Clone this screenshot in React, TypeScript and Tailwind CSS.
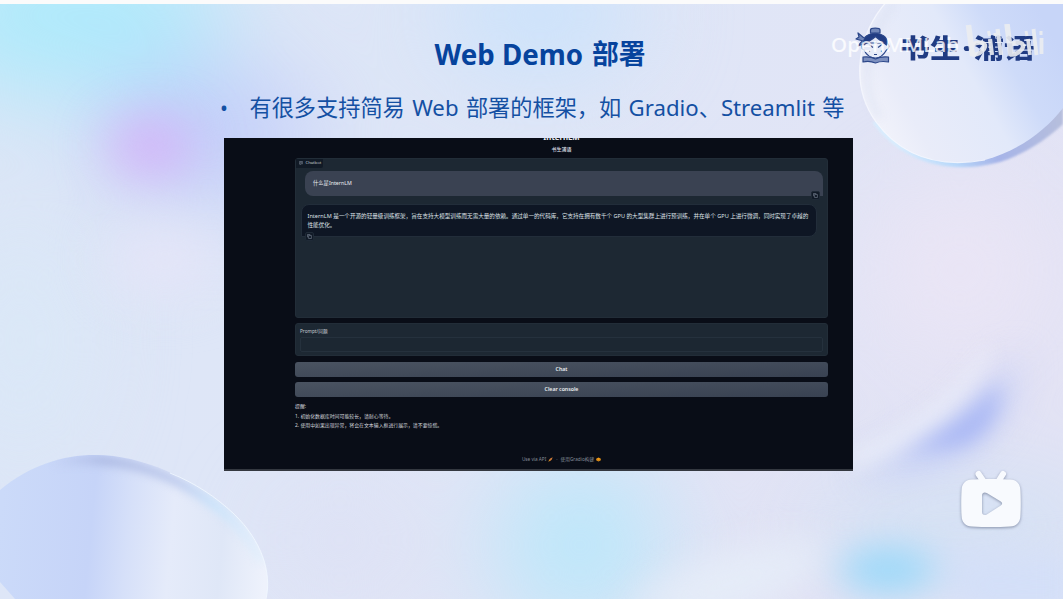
import React from "react";

const SANS = "font-['Noto_Sans','Noto_Sans_CJK_SC',sans-serif]";

function Backdrop() {
  return (
    <svg className="absolute inset-0" width="1063" height="599" viewBox="0 0 1063 599" colorInterpolationFilters="sRGB" aria-hidden="true">
      <defs>
        <filter id="b9" x="-50%" y="-50%" width="200%" height="200%"><feGaussianBlur stdDeviation="10" /></filter>
        <filter id="b16" x="-50%" y="-50%" width="200%" height="200%"><feGaussianBlur stdDeviation="18" /></filter>
        <filter id="b28" x="-80%" y="-80%" width="260%" height="260%"><feGaussianBlur stdDeviation="26" /></filter>
        <filter id="b50" x="-30%" y="-30%" width="160%" height="160%"><feGaussianBlur stdDeviation="48" /></filter>
        <filter id="b4" x="-20%" y="-20%" width="140%" height="140%"><feGaussianBlur stdDeviation="4" /></filter>
        <filter id="b1" x="-20%" y="-20%" width="140%" height="140%"><feGaussianBlur stdDeviation="0.9" /></filter>
        <linearGradient id="base" x1="0" y1="0" x2="1" y2="0.4">
          <stop offset="0" stopColor="#dbe6f7" />
          <stop offset="0.5" stopColor="#dfe6f7" />
          <stop offset="1" stopColor="#e3e3f5" />
        </linearGradient>
        <linearGradient id="lensL" x1="0" y1="520" x2="268" y2="545" gradientUnits="userSpaceOnUse">
          <stop offset="0" stopColor="#cbdaf9" />
          <stop offset="0.34" stopColor="#c6d4f8" />
          <stop offset="0.48" stopColor="#d6e0f9" />
          <stop offset="0.64" stopColor="#e5ebfa" />
          <stop offset="0.83" stopColor="#dfe7f7" />
          <stop offset="1" stopColor="#eef2fc" />
        </linearGradient>
        <linearGradient id="lensR" x1="872" y1="130" x2="1050" y2="30" gradientUnits="userSpaceOnUse">
          <stop offset="0" stopColor="#f3f4fb" />
          <stop offset="0.2" stopColor="#e9ecf9" />
          <stop offset="0.55" stopColor="#e2e9fa" />
          <stop offset="0.75" stopColor="#cedbf9" />
          <stop offset="1" stopColor="#c7d5f8" />
        </linearGradient>
        <linearGradient id="rimR" x1="900" y1="160" x2="1063" y2="110" gradientUnits="userSpaceOnUse">
          <stop offset="0" stopColor="#d8ecfd" />
          <stop offset="0.3" stopColor="#b8d8fa" />
          <stop offset="0.55" stopColor="#a6b4e8" />
          <stop offset="1" stopColor="#b7bfdc" />
        </linearGradient>
        <linearGradient id="rimL" x1="50" y1="0" x2="268" y2="0" gradientUnits="userSpaceOnUse">
          <stop offset="0" stopColor="#b4c1ea" stopOpacity="0" />
          <stop offset="0.25" stopColor="#adbae3" />
          <stop offset="0.58" stopColor="#bcc9ec" />
          <stop offset="0.75" stopColor="#c9e3fb" />
          <stop offset="1" stopColor="#dceefd" stopOpacity="0.4" />
        </linearGradient>
        <clipPath id="clipL"><path d="M0 490C30 465 63 455 95 455C145 455 200 482 234 514C262 541 272 573 266 599H0Z" /></clipPath>
      </defs>
      <rect width="1063" height="599" fill="url(#base)" />
      <g filter="url(#b50)">
        <ellipse cx="70" cy="15" rx="155" ry="80" fill="#aeeafb" />
        <ellipse cx="540" cy="15" rx="100" ry="60" fill="#cae2fb" />
        <ellipse cx="210" cy="135" rx="105" ry="65" fill="#c1ccf9" />
        <ellipse cx="20" cy="340" rx="60" ry="120" fill="#dae8f7" />
        <ellipse cx="580" cy="545" rx="85" ry="85" fill="#bbe7fa" />
        <ellipse cx="960" cy="270" rx="90" ry="90" fill="#eae5f5" />
        <ellipse cx="960" cy="525" rx="160" ry="45" fill="#d0e1f4" />
        <ellipse cx="340" cy="540" rx="60" ry="40" fill="#dcdff4" />
      </g>
      <g filter="url(#b28)">
        <ellipse cx="150" cy="146" rx="42" ry="24" fill="#d7abf8" />
        <ellipse cx="165" cy="260" rx="60" ry="35" fill="#e4e5f8" />
      </g>
      <g filter="url(#b16)">
        <path d="M620 615C680 560 750 535 830 545C820 580 770 600 720 620Z" fill="#e5ecf8" />
        <ellipse cx="888" cy="570" rx="48" ry="22" fill="#98d8f9" />
        <path d="M940 550C980 550 1020 555 1080 555V620H960Z" fill="#d3dff8" />
        <path d="M1020 352C1012 425 960 478 850 474C925 448 975 410 1020 352Z" fill="#bfcbf7" />
      </g>
      <g filter="url(#b9)">
        <path d="M1000 382C1002 412 985 446 945 448C930 449 912 452 895 458C935 438 973 415 1000 382Z" fill="#a9b7f4" />
        <path d="M992 345C980 385 930 440 850 468L850 454C910 430 960 390 980 355Z" fill="#eceffa" />
      </g>

      <path d="M872 122C900 162 948 175 996 163C1022 156 1046 140 1063 124V104Z" fill="url(#rimR)" filter="url(#b1)" />
      <path d="M888 0C856 35 850 86 876 122C902 157 940 168 985 160C1020 150 1046 130 1063 108V0Z" fill="url(#lensR)" />
      <path d="M895 2C864 42 858 85 880 118" fill="none" stroke="#dbe1f2" strokeWidth="4" filter="url(#b4)" />
      <path d="M888 0C856 35 850 86 876 122C902 157 940 168 985 160" fill="none" stroke="#f8faff" strokeWidth="1.2" opacity="0.75" />

      <path d="M0 490C30 465 63 455 95 455C145 455 200 482 234 514C262 541 272 573 266 599H15L0 582Z" fill="url(#lensL)" />
      <g clipPath="url(#clipL)">
        <path d="M50 463C110 453 160 467 205 498C232 517 250 536 262 562" fill="none" stroke="url(#rimL)" strokeWidth="9" filter="url(#b4)" />
      </g>
      <path d="M170 473C195 483 216 497 234 514C262 541 272 573 266 599" fill="none" stroke="#f1f8ff" strokeWidth="1" opacity="0.85" />
      <rect width="1063" height="4" fill="#fbfbfb" />
    </svg>
  );
}

function Mascot() {
  return (
    <svg className="block shrink-0" width="36" height="37" viewBox="0 0 36 37" fill="none" stroke="#2b4689" strokeWidth="1.2" strokeLinejoin="round">
      <path d="M15.5 6V3C15.5 .6 25 .6 25 3V6Z" fill="#7086b8" />
      <path d="M9 23C12 29 16 31 20.5 31C25 31 28 29 31.5 23C34.5 22 34.5 17 32 16H8.5C6 17 6 22 9 23Z" fill="#e6ebf8" />
      <path d="M8 16C8 3 32 3 32.500 16L31.500 18C28 15 24 13 20.500 9.500C17 13 12 15 9 18Z" fill="#213d84" />
      <path d="M9 11L3 6L4 10L1 12L8 14M7 14L3 19L8 17" fill="#7086b8" />
      <path d="M14 17.500L18 20.500M27 17.500L23 20.500M14.500 23.500V25M26.500 23.500V25M19 27.500H22" />
      <path d="M8 30C12 29.5 17 30 20.5 32C24 30 29 29.5 33.5 30V35C28 34 24 34.5 20.5 36C17 34.5 12 34 8 35Z" fill="#7d90bf" />
    </svg>
  );
}

function BilibiliMark() {
  return (
    <svg className="block shrink-0" width="80" height="36" viewBox="0 0 80 36" fill="none" stroke="#eceef1" strokeLinecap="butt">
      <path d="M4.5 1L8.5 32" strokeWidth="5.5" />
      <path d="M8 21C16 16 24 19 20 25C17 29 12 31 8 30.5" strokeWidth="4.5" />
      <path d="M26 15L28 31M33.5 5L37 31" strokeWidth="4.2" />
      <path d="M24.5 7L25.5 12M31 9V12" strokeWidth="3" />
      <path d="M43 0L47 32" strokeWidth="5.5" />
      <path d="M46 21C54 16 62 19 58 25C55 29 50 31 46 30.5" strokeWidth="4.5" />
      <path d="M64 15L66 31M69.5 5L72.5 31M77.5 14V30" strokeWidth="3.8" />
      <path d="M62 7L63 12M77 7V11" strokeWidth="3" />
    </svg>
  );
}

function CopyIcon() {
  return (
    <svg className="block" width="5" height="5" viewBox="0 0 5 5" fill="none" stroke="#8490a0" strokeWidth="0.55">
      <path d="M1.6 1.5H4.4V4.5H1.6ZM.5 3.3V.5H3.3" />
    </svg>
  );
}

function CopyButton({ place }: { place: string }) {
  return (
    <span className={"absolute flex h-[9px] w-[9px] items-center justify-center rounded-[2px] border border-[#1f2a37] bg-[#111a27] " + place}>
      <CopyIcon />
    </span>
  );
}

function GradioButton({ children }: { children: React.ReactNode }) {
  return (
    <button className="flex h-[15px] w-full shrink-0 items-center justify-center rounded-[3px] bg-linear-to-br from-[#4a5361] to-[#394252] pt-px text-[5.2px] leading-none font-semibold text-[#eceef1]">
      {children}
    </button>
  );
}

function DemoPanel() {
  return (
    <section className="ml-[223.5px] flex h-[333px] w-[629px] shrink-0 flex-col overflow-hidden border-b-2 border-[#343840] bg-[#090d17] pr-[24.5px] pl-[71.5px] text-[#d9dce1]">
      <h2 className="-mt-[6px] h-[11px] shrink-0 text-center text-[7.8px] leading-[11px] font-bold text-[#eceef1]">InternLM</h2>
      <p className="mt-[3px] h-[6px] shrink-0 text-center text-[5px] leading-[6px] font-medium">书生浦语</p>

      <div className="mt-[6px] h-[160px] shrink-0 rounded-[3px] border border-[#222d38] bg-[#1d2833]">
        <div className="flex h-[8.5px] w-[27px] items-center gap-[2.5px] rounded-br-[2px] bg-[#111a26] pl-[3px] text-[4.2px] leading-none text-[#c3c8d0]">
          <svg width="4" height="4" viewBox="0 0 4 4" fill="none" stroke="#778290" strokeWidth="0.6">
            <path d="M.4.5H3.6V2.8H2L1 3.7V2.8H.4ZM1.2 1.3H2.8M1.2 2H2.8" />
          </svg>
          <span>Chatbot</span>
        </div>
        <div className="relative mt-[3.5px] mr-[4px] ml-[9px] flex h-[25px] items-center rounded-[8px] rounded-br-none bg-[#3a4252] pl-[8px] text-[5.3px] leading-none text-[#eceef1]">
          什么是InternLM
          <CopyButton place="right-[3px] -bottom-[4px]" />
        </div>
        <div className="relative mt-[8px] mr-[10px] ml-[5px] h-[33px] rounded-[8px] rounded-bl-none border border-[#222d3a] bg-[#0e1624] pt-[7px] pl-[5.5px] text-[5.58px] leading-[9.3px] text-[#dfe2e7]">
          <p className="whitespace-nowrap">InternLM 是一个开源的轻量级训练框架，旨在支持大模型训练而无需大量的依赖。通过单一的代码库，它支持在拥有数千个 GPU 的大型集群上进行预训练，并在单个 GPU 上进行微调，同时实现了卓越的<br />性能优化。</p>
          <CopyButton place="left-[3px] -bottom-[5px]" />
        </div>
      </div>

      <div className="mt-[5px] h-[33px] shrink-0 rounded-[3px] border border-[#222d38] bg-[#1d2833] px-[4px] pt-[3.5px]">
        <label className="block h-[6px] text-[4.7px] leading-[6px] text-[#c8ccd3]">Prompt/问题</label>
        <div className="mt-[3.5px] h-[15px] rounded-[2px] border border-[#25313d] bg-[#1c2732]" />
      </div>

      <div className="mt-[5.5px] flex shrink-0 flex-col gap-[5.5px]">
        <GradioButton>Chat</GradioButton>
        <GradioButton>Clear console</GradioButton>
      </div>

      <div className="mt-[5.3px] shrink-0 text-[4.9px] leading-[9.4px] whitespace-nowrap text-[#d3d6dc]">
        <p>提醒:</p>
        <p>1. 初始化数据库时间可能较长，请耐心等待。</p>
        <p>2. 使用中如果出现异常，将会在文本输入框进行展示，请不要惊慌。</p>
      </div>

      <footer className="mt-[25.7px] flex h-[7px] shrink-0 items-center justify-center text-[4.7px] leading-none text-[#858c98]">
        <span>Use via API</span>
        <svg className="ml-[2px]" width="5" height="5" viewBox="0 0 5 5">
          <path d="M4.7.3L2.2 1.4L1.1 2.8L2.2 3.9L3.7 2.8Z" fill="#cc7a39" />
          <path d="M1.2 2.7L.3 4.8L2.2 3.8Z" fill="#f39b22" />
        </svg>
        <span className="mx-[3px]">·</span>
        <span>使用Gradio构建</span>
        <svg className="ml-[2px]" width="5" height="5" viewBox="0 0 5 5">
          <path d="M2.5.4L4.8 1.7V3.3L2.5 4.6L.2 3.3V1.7Z" fill="#f39b16" />
          <path d="M.4 2.4L2.5 3.5L4.6 2.4" stroke="#8d5617" strokeWidth=".4" fill="none" />
        </svg>
      </footer>
    </section>
  );
}

function PlayBadge() {
  return (
    <svg className="absolute top-[466px] left-[956px] drop-shadow-[0_1px_1.5px_rgba(70,80,110,0.55)]" width="70" height="66" viewBox="0 0 70 66">
      <path d="M22.5 8L28 16M47 8L42 16" stroke="#f8fafe" strokeWidth="6" strokeLinecap="round" />
      <path fillRule="evenodd" fill="#f8fafe" d="M16 13.5C35 12.7 35 12.7 54 13.5C60.5 13.8 64.2 17.5 64.4 24C64.9 32 64.9 43 64.4 50C64.2 56.5 60.5 60.2 54 60.5C41 61.3 29 61.3 16 60.5C9.5 60.2 5.8 56.5 5.6 50C5.1 43 5.1 32 5.6 24C5.8 17.5 9.5 13.8 16 13.5ZM26 29.5V46C26 48.7 28.5 49.8 30.8 48.4L44.8 39.5C46.6 38.3 46.6 36.7 44.8 35.6L30.8 27C28.5 25.6 26 26.7 26 29.5Z" />
    </svg>
  );
}

export default function App() {
  return (
    <main className={"relative flex h-[599px] w-[1063px] flex-col overflow-hidden " + SANS}>
      <Backdrop />
      <div className="relative flex flex-col">
        <h1 className="mt-[36px] flex h-[36px] items-center gap-[9px] pl-[434.5px] text-[27.7px] leading-[36px] font-bold whitespace-nowrap text-[#06439d]">
          <span>Web Demo</span>
          <span className="text-[26.8px]">部署</span>
        </h1>
        <p className="mt-[19px] flex h-[34px] items-center pl-[220px] text-[22.2px] leading-[34px] whitespace-nowrap text-[#1450a3]">
          <span className="w-[29.5px] text-[21px]">•</span>
          <span className="[word-spacing:1.6px]">有很多支持简易 Web 部署的框架，如 Gradio、Streamlit 等</span>
        </p>
        <div className="h-[13px]" />
        <DemoPanel />
      </div>

      <div className="absolute top-[27px] left-[855px] flex items-start">
        <Mascot />
        <span className="mt-[5px] ml-[8.5px] flex origin-center scale-y-[0.86] text-[30.5px] leading-[32px] font-black whitespace-nowrap text-[#203b82]">
          <span>书生</span>
          <span className="w-[13px] text-center">·</span>
          <span>浦语</span>
        </span>
      </div>
      <div className="absolute top-[24px] left-[831px] flex items-start">
        <span className="mt-[5.500px] w-[133px] text-[20.5px] leading-[28px] font-medium tracking-[0.2px] text-white/80">OpenMMLab</span>
        <div className="opacity-90">
          <BilibiliMark />
        </div>
      </div>
      <PlayBadge />
    </main>
  );
}
